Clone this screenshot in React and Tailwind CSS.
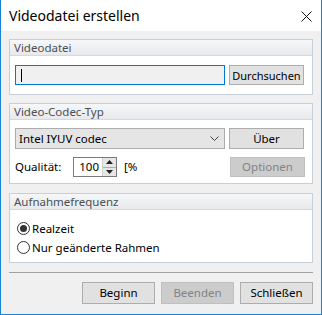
import React from 'react';

const font = { fontFamily: '"Noto Sans", "Open Sans", sans-serif' };

const GroupBox = ({ title, className = '', children }) => (
  <div className={`border border-[#c6ced7] bg-white ${className}`}>
    <div className="h-[16px] border-b border-[#d3d9df] bg-gradient-to-b from-[#f6f7f8] to-[#e7e9ec] pl-[4px] text-[11.5px] leading-[15px] text-[#4a4f55]">
      {title}
    </div>
    {children}
  </div>
);

const Btn = ({ children, disabled, small, className = '' }) => (
  <button
    className={`flex items-center justify-center border leading-none ${small ? 'text-[11px]' : 'text-[11.5px]'} ${
      disabled ? 'border-[#bfbfbf] bg-[#cccccc] text-[#838383]' : 'border-[#adadad] bg-[#e1e1e1] text-black'
    } ${className}`}
  >
    {children}
  </button>
);

const Radio = ({ checked, label }) => (
  <div className="flex h-[19px] items-center">
    <span className="flex h-[13px] w-[13px] items-center justify-center rounded-full border border-[#333333] bg-white">
      {checked && <span className="h-[7px] w-[7px] rounded-full bg-[#333333]" />}
    </span>
    <span className="ml-[2px] text-[11.5px] text-black">{label}</span>
  </div>
);

export default function App() {
  return (
    <div
      className="flex h-[315px] w-[322px] flex-col border-x border-b border-[#1883d7] bg-[#f0f0f0]"
      style={font}
    >
      <div className="flex h-[31px] items-center justify-between bg-white pl-[8px] pr-[9px]">
        <span className="text-[14px] text-black">Videodatei erstellen</span>
        <svg width="11" height="11" viewBox="0 0 11 11" className="mt-[1px]">
          <path d="M0.5 0.5 L10.5 10.5 M10.5 0.5 L0.5 10.5" stroke="#111" strokeWidth="1" />
        </svg>
      </div>

      <div className="flex flex-col px-[8px] pt-[8px]">
        <GroupBox title="Videodatei">
          <div className="flex items-center gap-[4px] pb-[9px] pl-[5px] pt-[9px]">
            <div className="flex h-[20px] w-[210px] items-center border border-[#0078d7] bg-[#f0f0f0] pl-[5px]">
              <span className="h-[13px] w-px bg-black" />
            </div>
            <Btn small className="h-[20px] w-[75px]">Durchsuchen</Btn>
          </div>
        </GroupBox>

        <GroupBox title="Video-Codec-Typ" className="mt-[8px]">
          <div className="flex flex-col pb-[6px] pl-[5px] pt-[8px]">
            <div className="flex items-center gap-[4px]">
              <div className="flex h-[21px] w-[210px] items-center justify-between border border-[#acacac] bg-[#e5e5e5] pl-[3px] pr-[5px] text-[11.5px] text-black">
                <span>Intel IYUV codec</span>
                <svg width="9" height="5" viewBox="0 0 9 5">
                  <path d="M0.5 0.5 L4.5 4.5 L8.5 0.5" stroke="#444" fill="none" strokeWidth="1" />
                </svg>
              </div>
              <Btn className="h-[21px] w-[75px]">Über</Btn>
            </div>
            <div className="mt-[8px] flex items-center">
              <span className="w-[58px] text-[11.5px] text-black">Qualität:</span>
              <div className="flex h-[20px] w-[44px] border border-[#7a7a7a] bg-white">
                <span className="flex flex-1 items-center justify-end pr-[3px] text-[11.5px] text-black">100</span>
                <div className="flex w-[14px] flex-col border-l border-[#d0d0d0] bg-[#e6e6e6]">
                  <div className="flex flex-1 items-center justify-center border-b border-[#adadad]">
                    <svg width="7" height="4" viewBox="0 0 7 4"><path d="M3.5 0 L7 4 L0 4 Z" fill="#222" /></svg>
                  </div>
                  <div className="flex flex-1 items-center justify-center">
                    <svg width="7" height="4" viewBox="0 0 7 4"><path d="M0 0 L7 0 L3.5 4 Z" fill="#222" /></svg>
                  </div>
                </div>
              </div>
              <span className="ml-[7px] text-[11.5px] text-black">[%</span>
              <Btn disabled className="ml-auto mr-[7px] h-[20px] w-[75px]">Optionen</Btn>
            </div>
          </div>
        </GroupBox>

        <GroupBox title="Aufnahmefrequenz" className="mt-[9px]">
          <div className="flex flex-col pb-[5px] pl-[7px] pt-[9px]">
            <Radio checked label="Realzeit" />
            <Radio label="Nur geänderte Rahmen" />
          </div>
        </GroupBox>

        <div className="mt-[9px] h-px bg-[#a0a0a0]" />

        <div className="mt-[9px] flex justify-end gap-[6px]">
          <Btn className="h-[22px] w-[73px]">Beginn</Btn>
          <Btn disabled className="h-[22px] w-[73px]">Beenden</Btn>
          <Btn className="h-[22px] w-[73px]">Schließen</Btn>
        </div>
      </div>
    </div>
  );
}
